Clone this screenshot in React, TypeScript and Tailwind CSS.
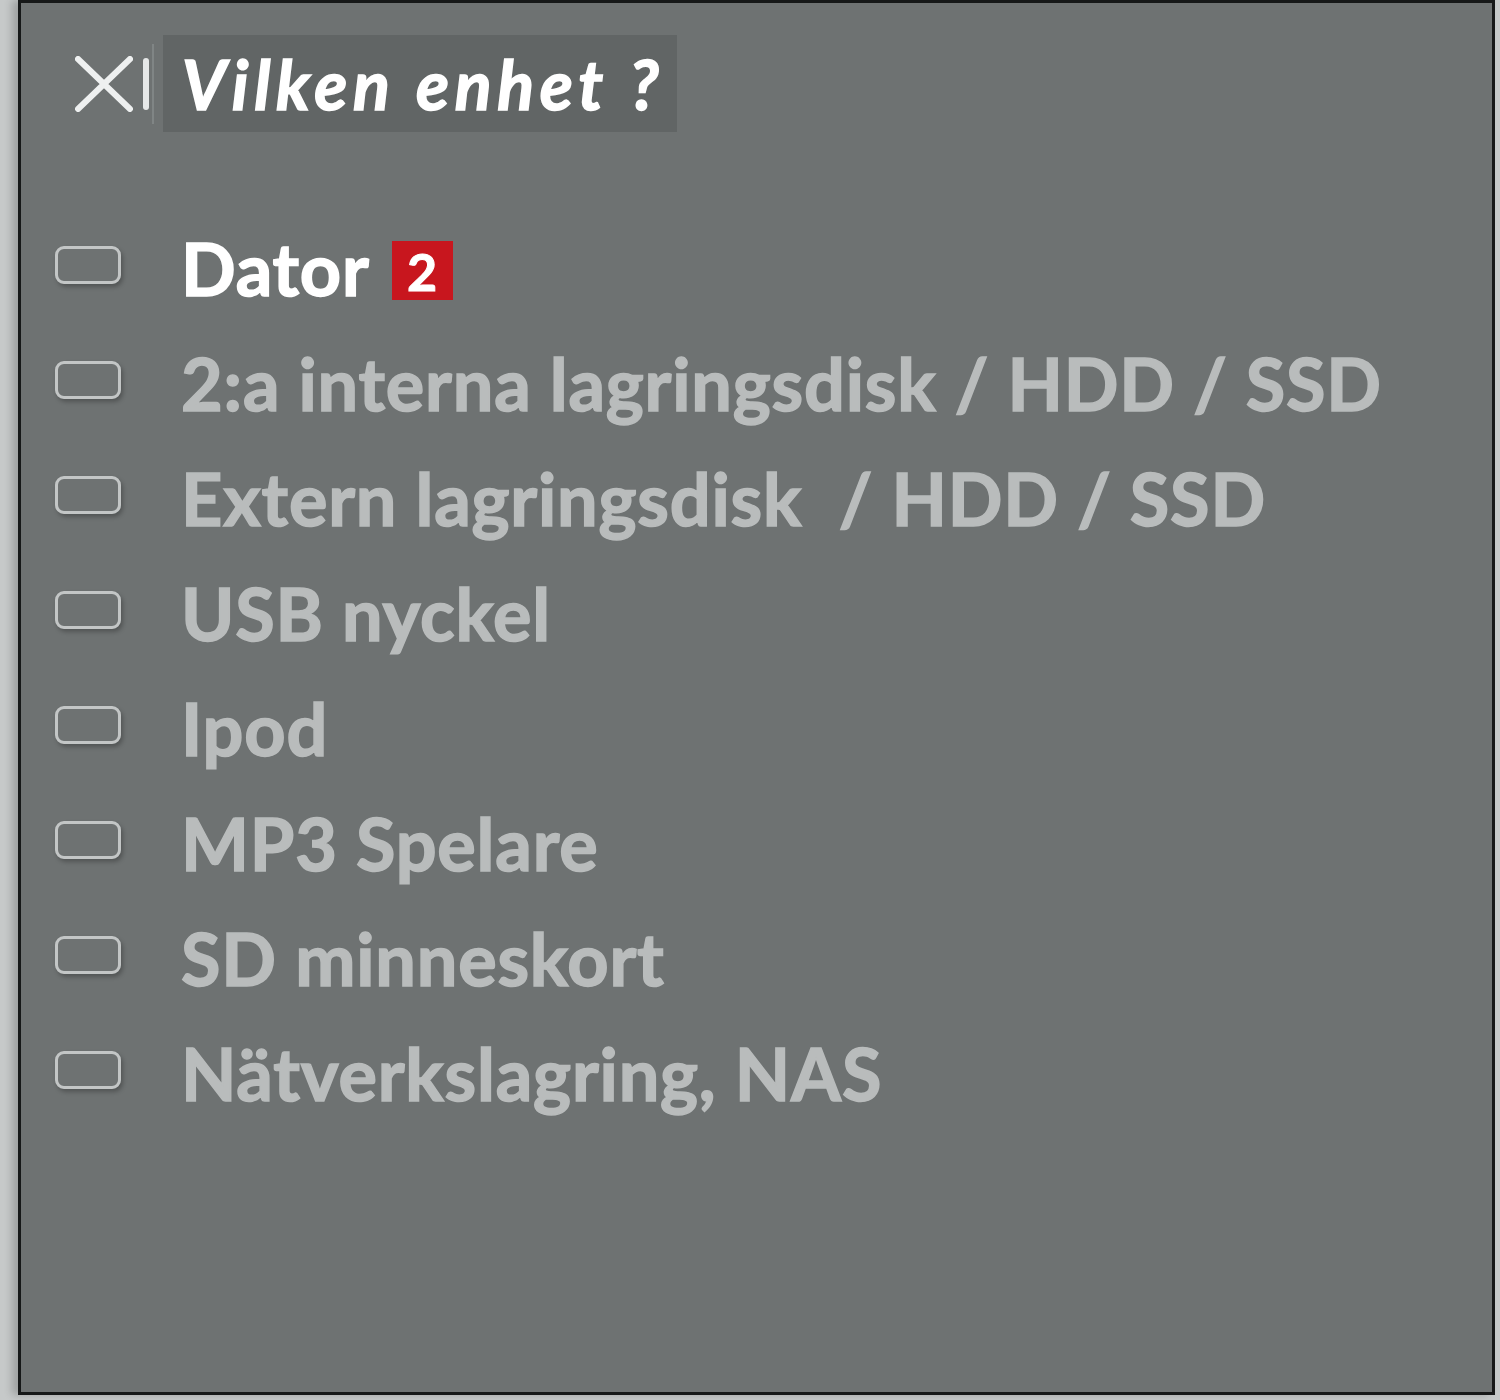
import React from 'react';

const items = [
  '2:a interna lagringsdisk / HDD / SSD',
  'Extern lagringsdisk  / HDD / SSD',
  'USB nyckel',
  'Ipod',
  'MP3 Spelare',
  'SD minneskort',
  'Nätverkslagring, NAS',
];

function Box() {
  return (
    <div className="w-[66px] h-[38px] shrink-0 -mt-[6px] rounded-[9px] border-[3px] border-[#c3c6c6] shadow-[2px_3px_4px_rgba(0,0,0,0.25)]" />
  );
}

export default function App() {
  return (
    <div className="w-[1500px] h-[1400px] bg-[#c6c9c9] flex" style={{ fontFamily: 'Lato, "Open Sans", sans-serif' }}>
      <div className="ml-[18px] w-[1477px] h-[1395px] border-[3px] border-[#161818] bg-[#6e7272] shadow-[-6px_0_8px_rgba(0,0,0,0.2)] flex flex-col">
        {/* Header */}
        <div className="flex items-center mt-[32px] ml-[54px]">
          <div className="flex items-center h-[97px]">
            <svg width="58" height="56" viewBox="0 0 58 56" className="shrink-0">
              <path d="M3 3 L55 53 M55 3 L3 53" stroke="#eef0f0" strokeWidth="6" strokeLinecap="round" />
            </svg>
            <div className="w-[6px] h-[52px] bg-[#e6e8e8] ml-[10px] rounded-sm" />
            <div className="w-[2px] h-[80px] bg-[#808585] ml-[3px]" />
          </div>
          <div className="ml-[9px] h-[97px] w-[514px] bg-[#616565] flex items-center pl-[19px]">
            <span className="text-[68px] italic font-bold text-white leading-none tracking-[5.7px] [-webkit-text-stroke:1.5px]">Vilken enhet ?</span>
          </div>
        </div>

        {/* Items */}
        <div className="mt-[78px] flex flex-col">
          <div className="h-[115px] flex items-center ml-[34px]">
            <Box />
            <span className="ml-[60px] text-[72px] font-bold text-white leading-none tracking-[0.8px] [-webkit-text-stroke:1.5px]">Dator</span>
            <span className="ml-[22px] mt-[6px] w-[61px] h-[59px] bg-[#c8161e] text-white text-[52px] font-bold leading-none flex items-center justify-center [-webkit-text-stroke:1px]">2</span>
          </div>
          {items.map((t) => (
            <div key={t} className="h-[115px] flex items-center ml-[34px]">
              <Box />
              <span className="ml-[60px] text-[72px] font-bold text-[#b9bcbc] leading-none whitespace-pre tracking-[0.8px] [-webkit-text-stroke:1.5px]">{t}</span>
            </div>
          ))}
        </div>
      </div>
    </div>
  );
}
